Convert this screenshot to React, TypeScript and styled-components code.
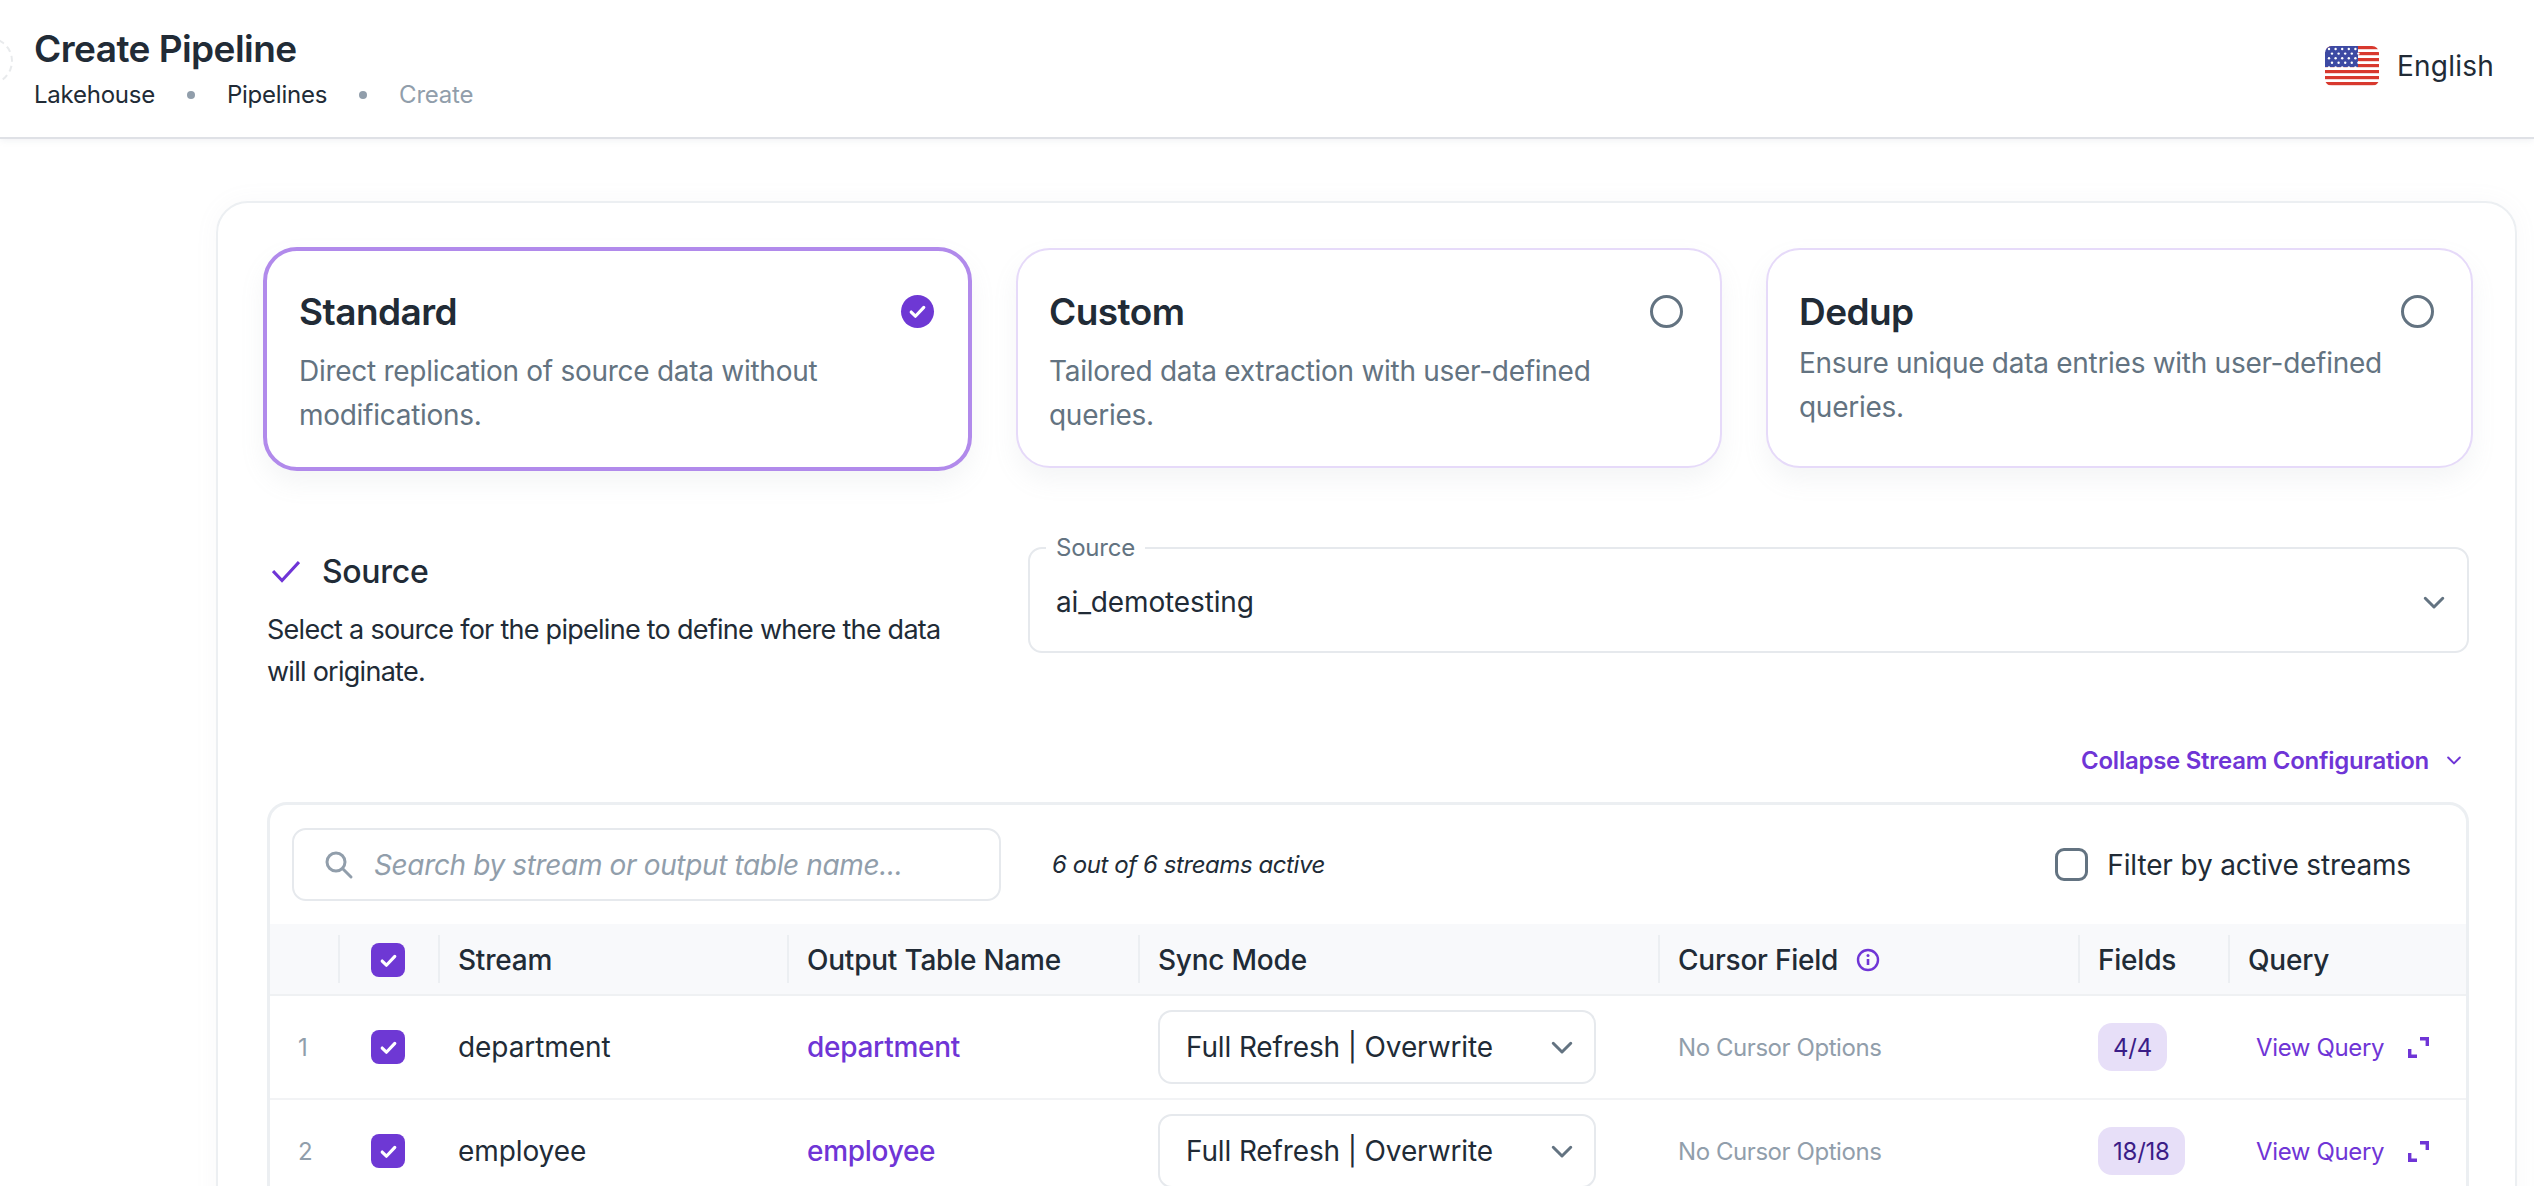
import styled, { createGlobalStyle } from "styled-components"

const GlobalStyle = createGlobalStyle`
	html, body {
		margin: 0;
		height: 100%;
		overflow: hidden;
		background: #fff;
	}
	body {
		font-family: Inter, "Liberation Sans", sans-serif;
		color: #212b36;
	}
`

const Page = styled.div`
	position: relative;
	height: 1186px;
	overflow: hidden;
`

const Header = styled.header`
	height: 137px;
	padding: 0 40px 0 34px;
	display: flex;
	justify-content: space-between;
	align-items: center;
	border-bottom: 2px solid #dfe1e6;
	box-shadow: 0 2px 6px rgba(145, 158, 171, 0.12);
`

const CollapseHandle = styled.div`
	position: absolute;
	left: -35px;
	top: 37px;
	width: 44px;
	height: 44px;
	border: 2px dashed #e8eaec;
	border-radius: 50%;
`

const Title = styled.h1`
	margin: 0 0 9px;
	font-size: 37px;
	line-height: 44px;
	font-weight: 600;
	letter-spacing: -0.015em;
`

const Crumbs = styled.div`
	display: flex;
	align-items: center;
	gap: 32px;
	margin-bottom: 1px;
	font-size: 24px;
	line-height: 30px;
	letter-spacing: -0.01em;
`

const Crumb = styled.span<{ $muted?: boolean }>`
	color: ${(p) => (p.$muted ? "#919eab" : "#212b36")};
`

const Dot = styled.span`
	width: 8px;
	height: 8px;
	border-radius: 50%;
	background: #919eab;
`

const Language = styled.div`
	display: flex;
	align-items: center;
	gap: 18px;
	margin-bottom: 5px;
	font-size: 28px;
	letter-spacing: 0.008em;
`

const Main = styled.main`
	padding: 62px 17px 0 216px;
`

const Panel = styled.section`
	padding: 44px 42px 40px 45px;
	border: 2px solid #eceff2;
	border-radius: 32px;
	box-shadow: 0 0 24px rgba(145, 158, 171, 0.06);
`

const Modes = styled.div`
	display: grid;
	grid-template-columns: 709px 706px 707px;
	gap: 44px;
	align-items: start;
`

const ModeCard = styled.div<{ $active?: boolean }>`
	height: ${(p) => (p.$active ? "224px" : "220px")};
	margin-top: ${(p) => (p.$active ? "0" : "1px")};
	padding: ${(p) => (p.$active ? "40px 34px 0 32px" : "41px 37px 0 31px")};
	box-sizing: border-box;
	border: ${(p) => (p.$active ? "4px solid #b18aeb" : "2px solid #e6daf9")};
	border-radius: 34px;
	background: #fff;
	box-shadow: 0 12px 24px rgba(145, 158, 171, 0.1);
`

const ModeHead = styled.div`
	display: flex;
	justify-content: space-between;
	align-items: center;
	height: 40px;
`

const ModeTitle = styled.div`
	font-size: 37px;
	font-weight: 600;
	letter-spacing: -0.015em;
`

const ModeText = styled.p<{ $tight?: boolean }>`
	margin: ${(p) => (p.$tight ? "10px 0 0" : "18px 0 0")};
	font-size: 28px;
	line-height: 44px;
	letter-spacing: -0.01em;
	color: #637381;
`

const Radio = styled.span`
	width: 33px;
	height: 33px;
	box-sizing: border-box;
	border: 3px solid #637381;
	border-radius: 50%;
`

const SourceRow = styled.div`
	display: flex;
	gap: 61px;
	margin: 76px 4px 0;
`

const SourceInfo = styled.div`
	width: 700px;
	flex: none;
`

const StepTitle = styled.div`
	display: flex;
	align-items: center;
	gap: 22px;
	height: 40px;
	margin: 4px 0 18px 5px;
	font-size: 32px;
	font-weight: 500;
	letter-spacing: -0.01em;
`

const StepText = styled.p`
	margin: 0;
	font-size: 27px;
	line-height: 42px;
	letter-spacing: -0.027em;
`

const SourceField = styled.div`
	position: relative;
	flex: 1;
	height: 106px;
	padding: 3px 18px 0 26px;
	box-sizing: border-box;
	display: flex;
	justify-content: space-between;
	align-items: center;
	border: 2px solid #e6e9ed;
	border-radius: 14px;
	font-size: 28px;
	letter-spacing: -0.005em;
`

const FieldLabel = styled.label`
	position: absolute;
	left: 16px;
	top: -15px;
	padding: 0 10px;
	background: #fff;
	font-size: 24px;
	line-height: 28px;
	letter-spacing: -0.01em;
	color: #637381;
`

const CollapseRow = styled.div`
	display: flex;
	justify-content: flex-end;
	align-items: center;
	gap: 15px;
	margin: 49px 0 0;
	padding-right: 9px;
	height: 36px;
	font-size: 24px;
	font-weight: 600;
	letter-spacing: -0.011em;
	color: #6f35d6;
`

const TableCard = styled.div`
	margin: 24px 4px 0;
	border: 3px solid #eceff2;
	border-radius: 20px;
`

const Toolbar = styled.div`
	display: flex;
	align-items: center;
	height: 119px;
	padding: 0 55px 0 22px;
`

const SearchBox = styled.div`
	width: 709px;
	height: 73px;
	margin-right: 51px;
	padding-left: 30px;
	box-sizing: border-box;
	display: flex;
	align-items: center;
	gap: 20px;
	border: 2px solid #e6e9ed;
	border-radius: 14px;
	font-size: 28px;
	font-style: italic;
	letter-spacing: -0.013em;
	color: #919eab;
`

const StreamCount = styled.span`
	flex: 1;
	font-size: 24px;
	font-style: italic;
	letter-spacing: -0.018em;
`

const FilterLabel = styled.label`
	display: flex;
	align-items: center;
	gap: 19px;
	font-size: 28px;
	letter-spacing: -0.005em;
`

const EmptyBox = styled.span`
	width: 33px;
	height: 33px;
	box-sizing: border-box;
	border: 3px solid #637381;
	border-radius: 9px;
`

const Grid = styled.div`
	display: grid;
	grid-template-columns: 68px 100px 349px 351px 520px 420px 150px 1fr;
`

const HeadCell = styled.div<{ $line?: boolean; $center?: boolean }>`
	height: 72px;
	box-sizing: border-box;
	padding: 2px 0 0 ${(p) => (p.$center ? "0" : "20px")};
	display: flex;
	align-items: center;
	justify-content: ${(p) => (p.$center ? "center" : "flex-start")};
	gap: 18px;
	background: #f8f9fb linear-gradient(#eceff2, #eceff2) 0 50% / ${(p) => (p.$line ? "2px 48px" : "0 0")} no-repeat;
	border-bottom: 2px solid #eff1f3;
	font-size: 28px;
	font-weight: 500;
	letter-spacing: -0.008em;
`

const BodyCell = styled.div<{ $link?: boolean; $muted?: boolean; $center?: boolean }>`
	height: 104px;
	box-sizing: border-box;
	padding-left: ${(p) => (p.$center ? "0" : "20px")};
	display: flex;
	align-items: center;
	justify-content: ${(p) => (p.$center ? "center" : "flex-start")};
	border-bottom: 2px solid #f2f3f5;
	font-size: 28px;
	font-weight: ${(p) => (p.$link ? 500 : 400)};
	letter-spacing: ${(p) => (p.$link ? "-0.01em" : "-0.003em")};
	color: ${(p) => (p.$link ? "#6f35d6" : p.$muted ? "#919eab" : "#212b36")};
`

const IndexCell = styled(BodyCell)`
	padding-left: 28px;
	font-size: 24px;
	color: #919eab;
`

const Check = styled.span<{ $round?: boolean }>`
	width: ${(p) => (p.$round ? "33px" : "34px")};
	height: ${(p) => (p.$round ? "33px" : "34px")};
	display: grid;
	place-items: center;
	border-radius: ${(p) => (p.$round ? "50%" : "8px")};
	background: #6e38d4;
`

const SyncSelect = styled.div`
	width: 438px;
	height: 74px;
	padding: 0 17px 0 26px;
	box-sizing: border-box;
	display: flex;
	justify-content: space-between;
	align-items: center;
	border: 2px solid #e6e9ed;
	border-radius: 14px;
	font-size: 28px;
	letter-spacing: -0.005em;
`

const CursorText = styled.span`
	font-size: 24px;
	letter-spacing: -0.018em;
`

const Badge = styled.span`
	height: 48px;
	padding: 0 15px;
	display: flex;
	align-items: center;
	border-radius: 14px;
	background: #e7dff8;
	font-size: 24px;
	letter-spacing: -0.01em;
	color: #3b1d87;
`

const QueryLink = styled.div`
	display: flex;
	align-items: center;
	gap: 24px;
	margin-left: 8px;
	font-size: 24px;
	letter-spacing: -0.015em;
	color: #6f35d6;
`

function Flag() {
	const stars: [number, number][] = []
	for (let r = 0; r < 5; r++) {
		for (let c = 0; c < 5; c++) stars.push([4 + c * 6.6 + (r % 2) * 3, 3 + r * 4.6])
	}
	const stripes = [0, 6, 12, 18, 24, 30, 36]
	return (
		<svg width="54" height="40" viewBox="0 0 54 40">
			<defs>
				<clipPath id="flag-clip">
					<rect width="54" height="40" rx="7" />
				</clipPath>
			</defs>
			<g clipPath="url(#flag-clip)">
				<rect width="54" height="40" fill="#fff" />
				{stripes.map((y) => (
					<rect key={y} y={y} width="54" height="3.2" fill="#d8392e" />
				))}
				<rect width="33" height="21" fill="#3d4aa3" />
				{stars.map(([x, y]) => (
					<circle key={`${x}-${y}`} cx={x} cy={y} r="1.2" fill="#fff" />
				))}
			</g>
		</svg>
	)
}

function Tick() {
	return (
		<svg width="21" height="21" viewBox="0 0 20 20" fill="none">
			<path d="M4 10.5l4 4 8-8.5" stroke="#fff" strokeWidth="3" strokeLinecap="round" strokeLinejoin="round" />
		</svg>
	)
}

function Chevron({ color = "#637381", size = 30 }: { color?: string; size?: number }) {
	return (
		<svg width={size} height={size} viewBox="0 0 24 24" fill="none">
			<path d="M5 9l7 7 7-7" stroke={color} strokeWidth="2.4" strokeLinecap="round" strokeLinejoin="round" />
		</svg>
	)
}

function ExpandIcon() {
	return (
		<svg width="21" height="21" viewBox="0 0 21 21" fill="none">
			<path d="M12 1.7h7.3V9M1.7 12v7.3H9" stroke="#6f35d6" strokeWidth="3.4" />
		</svg>
	)
}

const streams = [
	{ name: "department", fields: "4/4" },
	{ name: "employee", fields: "18/18" },
]

function Row({ index, name, fields }: { index: number; name: string; fields: string }) {
	return (
		<>
			<IndexCell>{index}</IndexCell>
			<BodyCell $center>
				<Check>
					<Tick />
				</Check>
			</BodyCell>
			<BodyCell>{name}</BodyCell>
			<BodyCell $link>{name}</BodyCell>
			<BodyCell>
				<SyncSelect>
					Full Refresh | Overwrite
					<Chevron />
				</SyncSelect>
			</BodyCell>
			<BodyCell $muted>
				<CursorText>No Cursor Options</CursorText>
			</BodyCell>
			<BodyCell>
				<Badge>{fields}</Badge>
			</BodyCell>
			<BodyCell>
				<QueryLink>
					View Query
					<ExpandIcon />
				</QueryLink>
			</BodyCell>
		</>
	)
}

export default function App() {
	return (
		<Page>
			<GlobalStyle />
			<CollapseHandle />
			<Header>
				<div>
					<Title>Create Pipeline</Title>
					<Crumbs>
						<Crumb>Lakehouse</Crumb>
						<Dot />
						<Crumb>Pipelines</Crumb>
						<Dot />
						<Crumb $muted>Create</Crumb>
					</Crumbs>
				</div>
				<Language>
					<Flag />
					English
				</Language>
			</Header>
			<Main>
				<Panel>
					<Modes>
						<ModeCard $active>
							<ModeHead>
								<ModeTitle>Standard</ModeTitle>
								<Check $round>
									<Tick />
								</Check>
							</ModeHead>
							<ModeText>Direct replication of source data without modifications.</ModeText>
						</ModeCard>
						<ModeCard>
							<ModeHead>
								<ModeTitle>Custom</ModeTitle>
								<Radio />
							</ModeHead>
							<ModeText>Tailored data extraction with user-defined queries.</ModeText>
						</ModeCard>
						<ModeCard>
							<ModeHead>
								<ModeTitle>Dedup</ModeTitle>
								<Radio />
							</ModeHead>
							<ModeText $tight>Ensure unique data entries with user-defined queries.</ModeText>
						</ModeCard>
					</Modes>
					<SourceRow>
						<SourceInfo>
							<StepTitle>
								<svg width="28" height="24" viewBox="0 0 28 24" fill="none">
									<path d="M1 12l9 9.5L27 3" stroke="#6f35d6" strokeWidth="3.2" />
								</svg>
								Source
							</StepTitle>
							<StepText>Select a source for the pipeline to define where the data will originate.</StepText>
						</SourceInfo>
						<SourceField>
							<FieldLabel>Source</FieldLabel>
							ai_demotesting
							<Chevron />
						</SourceField>
					</SourceRow>
					<CollapseRow>
						Collapse Stream Configuration
						<Chevron color="#6f35d6" size={20} />
					</CollapseRow>
					<TableCard>
						<Toolbar>
							<SearchBox>
								<svg width="30" height="30" viewBox="0 0 30 30" fill="none">
									<circle cx="12" cy="12" r="9" stroke="#919eab" strokeWidth="3" />
									<path d="M19 19l8 8" stroke="#919eab" strokeWidth="3" strokeLinecap="round" />
								</svg>
								Search by stream or output table name...
							</SearchBox>
							<StreamCount>6 out of 6 streams active</StreamCount>
							<FilterLabel>
								<EmptyBox />
								Filter by active streams
							</FilterLabel>
						</Toolbar>
						<Grid>
							<HeadCell />
							<HeadCell $line $center>
								<Check>
									<Tick />
								</Check>
							</HeadCell>
							<HeadCell $line>Stream</HeadCell>
							<HeadCell $line>Output Table Name</HeadCell>
							<HeadCell $line>Sync Mode</HeadCell>
							<HeadCell $line>
								Cursor Field
								<svg width="24" height="24" viewBox="0 0 24 24" fill="none">
									<circle cx="12" cy="12" r="10" stroke="#6f35d6" strokeWidth="2.4" />
									<path d="M12 11v6" stroke="#6f35d6" strokeWidth="2.6" />
									<circle cx="12" cy="7.4" r="1.5" fill="#6f35d6" />
								</svg>
							</HeadCell>
							<HeadCell $line>Fields</HeadCell>
							<HeadCell $line>Query</HeadCell>
							{streams.map((s, i) => (
								<Row key={s.name} index={i + 1} name={s.name} fields={s.fields} />
							))}
						</Grid>
					</TableCard>
				</Panel>
			</Main>
		</Page>
	)
}
